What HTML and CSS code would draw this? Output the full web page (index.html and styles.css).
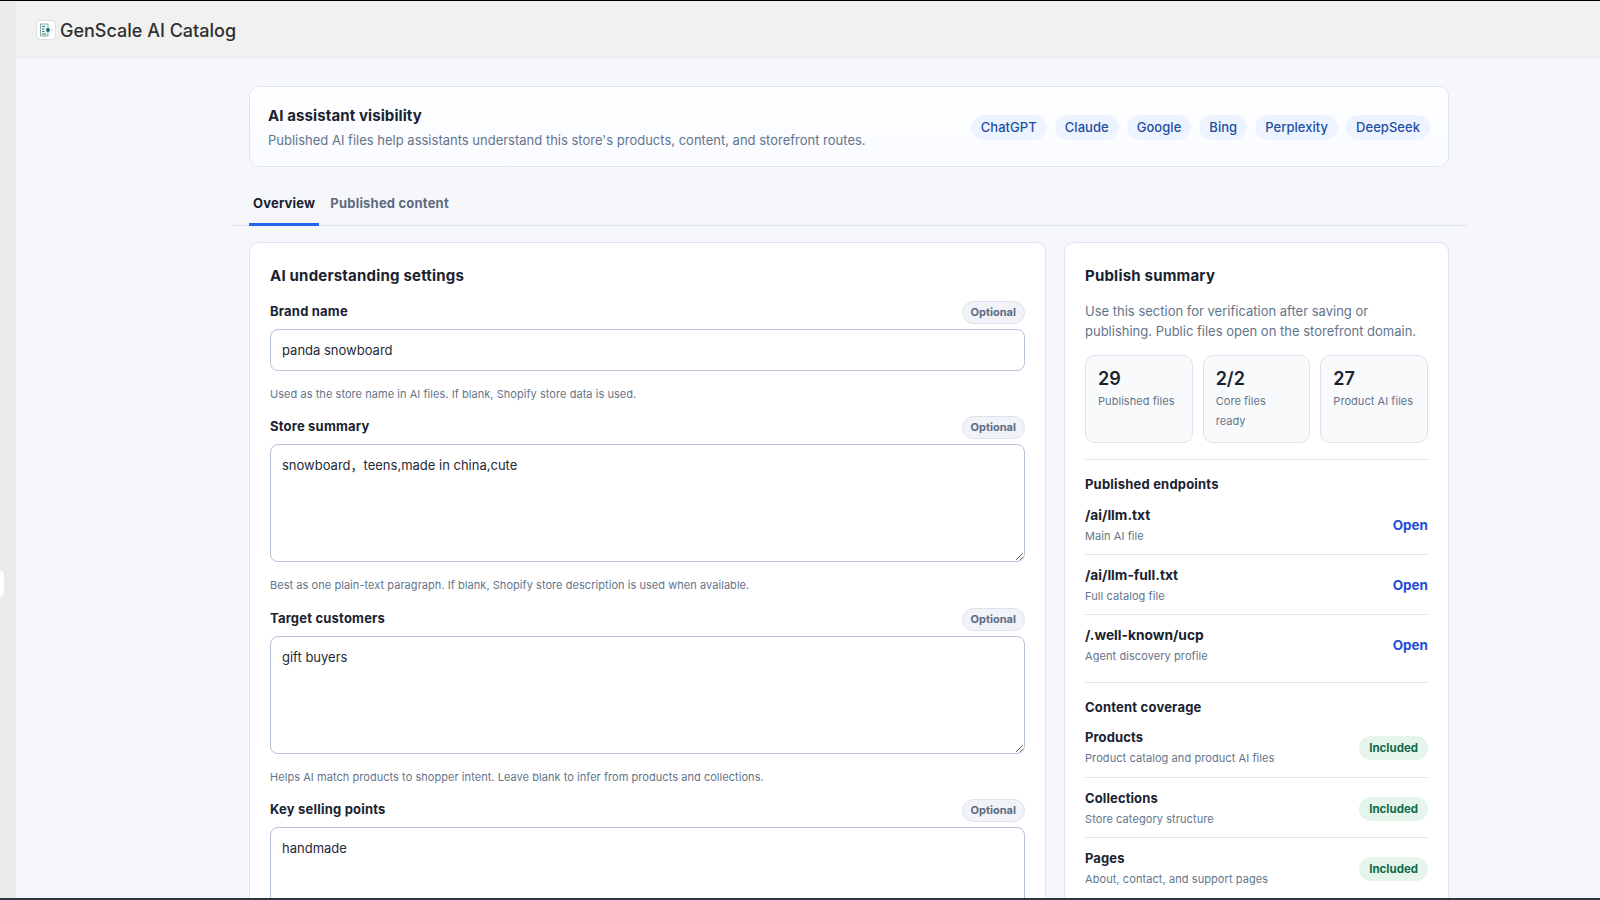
FILE: index.html
```html
<!DOCTYPE html>
<html lang="en">
<head>
    <meta charset="UTF-8">
    <meta name="viewport" content="width=device-width, initial-scale=1.0">
    <title>GenScale AI Catalog</title>
    <link rel="stylesheet" href="styles.css">
</head>
<body>
    <div class="window">
        <div class="side-strip"><span class="side-handle"></span></div>
        <div class="app">
            <header class="app-bar">
                <svg class="app-logo" width="20" height="20" viewBox="0 0 20 20" fill="none">
                    <rect x="0.5" y="0.5" width="19" height="19" rx="4" fill="#fff" stroke="#dedede"/>
                    <path d="M4.5 4h7.5v12H4.5z" fill="#eef5f4" stroke="#7fb0ad" stroke-width="1"/>
                    <path d="M6 6.5h3M6 9h2.5M6 11.5h2.5M6 14h4" stroke="#3f7f7c" stroke-width="1"/>
                    <circle cx="12" cy="10" r="2" fill="#1f6f6c"/>
                    <path d="M15 6.5v1M16.5 10H15M15 12.5v1M12 5v1.5M12 13.5V15" stroke="#a5c8c6" stroke-width="1"/>
                </svg>
                <span class="app-name">GenScale AI Catalog</span>
            </header>

            <main class="page">
                <section class="hero">
                    <div>
                        <div class="hero-title">AI assistant visibility</div>
                        <div class="hero-text">Published AI files help assistants understand this store's products, content, and storefront routes.</div>
                    </div>
                    <div class="pills">
                        <span class="pill">ChatGPT</span>
                        <span class="pill">Claude</span>
                        <span class="pill">Google</span>
                        <span class="pill">Bing</span>
                        <span class="pill">Perplexity</span>
                        <span class="pill">DeepSeek</span>
                    </div>
                </section>

                <nav class="tabs">
                    <a class="tab tab-active">Overview</a>
                    <a class="tab">Published content</a>
                </nav>

                <div class="columns">
                    <section class="card">
                        <h2 class="card-title">AI understanding settings</h2>

                        <div class="field">
                            <div class="field-head">
                                <span class="field-label">Brand name</span>
                                <span class="optional">Optional</span>
                            </div>
                            <input type="text" class="text-input" value="panda snowboard">
                            <div class="field-help">Used as the store name in AI files. If blank, Shopify store data is used.</div>
                        </div>

                        <div class="field field-wide-gap">
                            <div class="field-head">
                                <span class="field-label">Store summary</span>
                                <span class="optional">Optional</span>
                            </div>
                            <textarea class="text-area">snowboard，teens,made in china,cute</textarea>
                            <div class="field-help">Best as one plain-text paragraph. If blank, Shopify store description is used when available.</div>
                        </div>

                        <div class="field">
                            <div class="field-head">
                                <span class="field-label">Target customers</span>
                                <span class="optional">Optional</span>
                            </div>
                            <textarea class="text-area">gift buyers</textarea>
                            <div class="field-help">Helps AI match products to shopper intent. Leave blank to infer from products and collections.</div>
                        </div>

                        <div class="field">
                            <div class="field-head">
                                <span class="field-label">Key selling points</span>
                                <span class="optional">Optional</span>
                            </div>
                            <textarea class="text-area">handmade</textarea>
                        </div>
                    </section>

                    <aside class="card">
                        <h2 class="card-title">Publish summary</h2>
                        <p class="summary-text">Use this section for verification after saving or publishing. Public files open on the storefront domain.</p>

                        <div class="stats">
                            <div class="stat">
                                <div class="stat-value">29</div>
                                <div class="stat-label">Published files</div>
                            </div>
                            <div class="stat">
                                <div class="stat-value">2/2</div>
                                <div class="stat-label">Core files ready</div>
                            </div>
                            <div class="stat">
                                <div class="stat-value">27</div>
                                <div class="stat-label">Product AI files</div>
                            </div>
                        </div>

                        <div class="group">
                            <div class="group-title">Published endpoints</div>
                            <div class="row">
                                <div>
                                    <div class="row-name row-path">/ai/llm.txt</div>
                                    <div class="row-sub">Main AI file</div>
                                </div>
                                <a class="row-link">Open</a>
                            </div>
                            <div class="row">
                                <div>
                                    <div class="row-name row-path">/ai/llm-full.txt</div>
                                    <div class="row-sub">Full catalog file</div>
                                </div>
                                <a class="row-link">Open</a>
                            </div>
                            <div class="row">
                                <div>
                                    <div class="row-name row-path">/.well-known/ucp</div>
                                    <div class="row-sub">Agent discovery profile</div>
                                </div>
                                <a class="row-link">Open</a>
                            </div>
                        </div>

                        <div class="group">
                            <div class="group-title">Content coverage</div>
                            <div class="row row-first">
                                <div>
                                    <div class="row-name">Products</div>
                                    <div class="row-sub">Product catalog and product AI files</div>
                                </div>
                                <span class="included">Included</span>
                            </div>
                            <div class="row">
                                <div>
                                    <div class="row-name">Collections</div>
                                    <div class="row-sub">Store category structure</div>
                                </div>
                                <span class="included">Included</span>
                            </div>
                            <div class="row">
                                <div>
                                    <div class="row-name">Pages</div>
                                    <div class="row-sub">About, contact, and support pages</div>
                                </div>
                                <span class="included">Included</span>
                            </div>
                        </div>
                    </aside>
                </div>
            </main>
        </div>
    </div>
</body>
</html>
```

FILE: styles.css
```css
* {
    box-sizing: border-box;
}

html, body {
    height: 100%;
}

body {
    margin: 0;
    overflow: hidden;
    font-family: Inter, "Noto Sans CJK SC", sans-serif;
    color: #1a2230;
    background: linear-gradient(180deg, #000 0, #000 50%, #2f3542 50%);
}

.window {
    position: relative;
    display: flex;
    height: 897px;
    margin-top: 1px;
    overflow: hidden;
    background: #f6f7fb;
}

.side-strip {
    width: 16px;
    flex-shrink: 0;
    background: #ebebeb;
}

.side-handle {
    position: absolute;
    left: 0;
    top: 570px;
    width: 4px;
    height: 25px;
    background: #fff;
    border-radius: 0 4px 4px 0;
}

.app {
    flex: 1;
    min-width: 0;
    display: flex;
    flex-direction: column;
}

.app-bar {
    display: flex;
    align-items: center;
    gap: 4px;
    height: 57px;
    flex-shrink: 0;
    padding: 2px 20px 0;
    background: #f1f1f1;
    border-bottom: 1px solid #ececec;
}

.app-logo {
    flex-shrink: 0;
}

.app-name {
    font-size: 18px;
    font-weight: 500;
    color: #303030;
}

.page {
    width: 1236px;
    margin-left: 215px;
    padding: 28px 18px 0;
}

.hero {
    display: flex;
    justify-content: space-between;
    align-items: center;
    height: 81px;
    padding: 2px 18px 0;
    background: linear-gradient(180deg, #ffffff, #f9fbff);
    border: 1px solid #dfe5f0;
    border-radius: 10px;
}

.hero-title {
    margin-bottom: 2px;
    font-size: 15px;
    font-weight: 700;
    line-height: 22px;
    letter-spacing: .1px;
    color: #1a2230;
}

.hero-text {
    font-size: 13px;
    line-height: 22px;
    color: #64748b;
}

.pills {
    display: flex;
    gap: 8px;
}

.pill {
    padding: 0 10px;
    font-size: 13px;
    font-weight: 500;
    line-height: 25px;
    letter-spacing: .04px;
    color: #1d4fa3;
    background: #eef4ff;
    border-radius: 13px;
}

.tabs {
    display: flex;
    gap: 7px;
    height: 59px;
    margin: 0 -18px;
    padding: 20px 18px 0;
    border-bottom: 1px solid #dfe3ec;
}

.tab {
    height: 39px;
    padding: 6px 4px 0;
    font-size: 13px;
    font-weight: 700;
    line-height: 20px;
    letter-spacing: .2px;
    color: #5f6b7f;
}

.tab-active {
    color: #1a2230;
    border-bottom: 3px solid #2563eb;
}

.columns {
    display: grid;
    grid-template-columns: 797px 385px;
    gap: 18px;
    margin-top: 16px;
}

.card {
    padding: 20px;
    background: #fff;
    border: 1px solid #dfe5f0;
    border-radius: 10px;
}

.card-title {
    margin: 0 0 12px;
    padding-top: 1px;
    font-size: 15px;
    font-weight: 700;
    line-height: 24px;
    letter-spacing: .2px;
    color: #1a2230;
}

.field {
    margin-bottom: 12px;
}

.field-wide-gap {
    margin-bottom: 13px;
}

.field-head {
    display: flex;
    justify-content: space-between;
    align-items: center;
    height: 22px;
    margin-bottom: 7px;
}

.field-label {
    font-size: 13px;
    font-weight: 700;
    letter-spacing: .2px;
    color: #1a2230;
}

.optional {
    margin-top: 2px;
    padding: 0 8px;
    font-size: 11px;
    font-weight: 700;
    line-height: 21px;
    color: #5d6b82;
    background: #f1f3f8;
    border: 1px solid #dde3ee;
    border-radius: 12px;
}

.text-input,
.text-area {
    display: block;
    width: 100%;
    padding: 0 11px;
    font-family: inherit;
    font-size: 13px;
    color: #1f2937;
    background: #fff;
    border: 1px solid #b7c3d6;
    border-radius: 8px;
    outline: none;
}

.text-input {
    height: 42px;
}

.text-area {
    height: 118px;
    padding-top: 10px;
    padding-bottom: 10px;
    line-height: 20px;
    resize: vertical;
}

.field-help {
    margin-top: 14px;
    font-size: 11px;
    line-height: 18px;
    letter-spacing: .05px;
    color: #64748b;
}

.summary-text {
    margin: 0;
    padding-top: 1px;
    font-size: 13px;
    line-height: 20px;
    color: #64748b;
}

.stats {
    display: grid;
    grid-template-columns: repeat(3, 1fr);
    gap: 10px;
    margin-top: 14px;
}

.stat {
    height: 88px;
    padding: 12px 12px 0;
    background: #f9fafb;
    border: 1px solid #dde3ee;
    border-radius: 10px;
}

.stat-value {
    font-size: 18px;
    font-weight: 600;
    line-height: 22px;
    color: #1a2230;
}

.stat-label {
    margin-top: 1px;
    font-size: 11px;
    line-height: 20px;
    letter-spacing: .05px;
    color: #64748b;
}

.group {
    margin-top: 16px;
    padding-top: 14px;
    border-top: 1px solid #dfe5f0;
}

.group-title {
    font-size: 13px;
    font-weight: 700;
    line-height: 20px;
    letter-spacing: .2px;
    margin-bottom: 1px;
    color: #1a2230;
}

.row {
    display: flex;
    justify-content: space-between;
    align-items: center;
    padding: 10px 0 8px;
    border-bottom: 1px solid #dfe5f0;
}

.row-first {
    padding: 9px 0;
}

.group .row:last-child {
    border-bottom: none;
    padding-bottom: 0;
}

.row-name {
    font-size: 13px;
    font-weight: 700;
    line-height: 20px;
    letter-spacing: .1px;
    color: #1a2230;
}

.row-path {
    font-size: 13.75px;
    letter-spacing: 0;
}

.row-sub {
    margin-top: 1px;
    font-size: 11px;
    line-height: 20px;
    letter-spacing: .08px;
    color: #64748b;
}

.row-link {
    margin-bottom: 2px;
    font-size: 13.5px;
    font-weight: 700;
    color: #1d4ed8;
}

.included {
    padding: 0 10px;
    font-size: 11.5px;
    font-weight: 700;
    line-height: 24px;
    color: #0f6b47;
    background: #e5f5ec;
    border-radius: 12px;
}
```
